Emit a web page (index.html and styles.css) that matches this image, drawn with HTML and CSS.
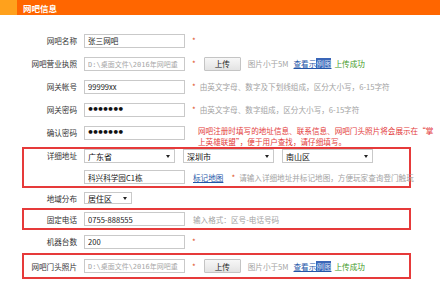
FILE: index.html
```html
<!DOCTYPE html>
<html>
<head>
  <meta charset="utf-8">
  <link rel="stylesheet" href="styles.css">
</head>

<body>
  <div class="head"><span class="head-title">网吧信息</span></div>

  <form class="info">
    <div class="row">
      <label class="lbl">网吧名称</label>
      <input class="txt" type="text" value="张三网吧">
      <span class="req">*</span>
    </div>

    <div class="row">
      <label class="lbl">网吧营业执照</label>
      <input class="txt path" type="text" value="D:\桌面文件\2016年网吧重">
      <span class="req">*</span>
      <button type="button" class="btn">上传</button>
      <span class="tip">图片小于5M</span>
      <a class="link" href="#">查看示<span class="hl">例图</span></a>
      <span class="ok">上传成功</span>
    </div>

    <div class="row">
      <label class="lbl">网关帐号</label>
      <input class="txt" type="text" value="99999xx">
      <span class="req">*</span>
      <span class="tip">由英文字母、数字及下划线组成，区分大小写，6-15字符</span>
    </div>

    <div class="row">
      <label class="lbl">网关密码</label>
      <input class="txt pwd" type="text" value="•••••••">
      <span class="req">*</span>
      <span class="tip">由英文字母、数字组成，区分大小写，6-15字符</span>
    </div>

    <div class="row">
      <label class="lbl">确认密码</label>
      <input class="txt pwd" type="text" value="•••••••">
      <span class="note">网吧注册时填写的地址信息、联系信息、网吧门头照片将会展示在“掌<br>上英雄联盟”，便于用户查找，请仔细填写。</span>
    </div>

    <div class="row mark addr">
      <label class="lbl">详细地址</label>
      <div class="addr-lines">
        <div class="line">
          <span class="sel"><select><option>广东省</option></select></span>
          <span class="sel"><select><option>深圳市</option></select></span>
          <span class="sel"><select><option>南山区</option></select></span>
        </div>
        <div class="line">
          <input class="txt" type="text" value="科兴科学园C1栋">
          <a class="link map" href="#">标记地图</a>
          <span class="req">*</span>
          <span class="tip">请输入详细地址并标记地图，方便玩家查询登门触玩</span>
        </div>
      </div>
    </div>

    <div class="row area">
      <label class="lbl">地域分布</label>
      <span class="sel small"><select><option>居住区</option></select></span>
    </div>

    <div class="row mark tel">
      <label class="lbl">固定电话</label>
      <input class="txt" type="text" value="0755-888555">
      <span class="tip hint">输入格式：区号-电话号码</span>
    </div>

    <div class="row">
      <label class="lbl">机器台数</label>
      <input class="txt" type="text" value="200">
      <span class="req">*</span>
    </div>

    <div class="row mark photo">
      <label class="lbl">网吧门头照片</label>
      <input class="txt path" type="text" value="D:\桌面文件\2016年网吧重">
      <span class="req">*</span>
      <button type="button" class="btn">上传</button>
      <span class="tip">图片小于5M</span>
      <a class="link" href="#">查看示<span class="hl">例图</span></a>
      <span class="ok">上传成功</span>
    </div>
  </form>
</body>
</html>
```

FILE: styles.css
```css
body {
  margin: 0;
  overflow: hidden;
  background: #fff;
  color: #333;
  font-family: "Noto Sans CJK SC", "Liberation Sans", sans-serif;
  font-size: 7.6px;
}

.head {
  display: flex;
  align-items: center;
  height: 15px;
  padding-left: 23px;
  background: linear-gradient(to right, #ffa11c 0, #ffa11c 17px, #ff6600 17px);
}

.head-title {
  color: #fff;
  font-size: 8.5px;
  font-weight: bold;
}

.info {
  width: 389px;
  padding: 14px 0 0 22px;
}

.row {
  display: flex;
  align-items: center;
  box-sizing: border-box;
  height: 23px;
  border: 2px solid transparent;
  white-space: nowrap;
}

.mark {
  border-color: #e63a3a;
}

.lbl {
  flex: none;
  width: 53px;
  margin-right: 7px;
  text-align: right;
  color: #333;
}

.txt {
  flex: none;
  box-sizing: border-box;
  width: 101px;
  height: 14px;
  margin: 0;
  padding: 0 3px;
  border: 1px solid #c9c9c9;
  font: inherit;
  color: #222;
}

.path {
  color: #a8a8a8;
  font-family: "DejaVu Sans Mono", "Noto Sans CJK SC", monospace;
  font-size: 7px;
}

.pwd {
  padding-left: 2px;
  font-family: "DejaVu Sans", sans-serif;
  font-size: 11px;
  font-weight: bold;
  letter-spacing: -2px;
  color: #111;
}

.req {
  margin-left: 7px;
  color: #e0502a;
  font-size: 8px;
}

.tip {
  margin-left: 4px;
  color: #a3a3a3;
}

.btn {
  box-sizing: border-box;
  width: 37px;
  height: 14px;
  margin-left: 8px;
  padding: 0;
  border: 1px solid #c4c4c4;
  border-radius: 1px;
  background: linear-gradient(#f7f7f7, #e3e3e3);
  font: inherit;
  color: #222;
}

.btn + .tip {
  margin-left: 7px;
}

.link {
  margin-left: 5px;
  color: #2456a8;
  text-decoration: underline;
}

.hl {
  background: #3a66b8;
  color: #d6e0f2;
}

.ok {
  margin-left: 3px;
  color: #3f9a1e;
}

.note {
  align-self: flex-start;
  margin: 2px 0 0 13px;
  line-height: 11px;
  color: #e33a3a;
}

/* address block */
.addr {
  align-items: flex-start;
  height: 41px;
  margin-top: 3px;
}

.addr .lbl {
  line-height: 14px;
}

.addr-lines {
  display: flex;
  flex-direction: column;
  gap: 7px;
}

.line {
  display: flex;
  align-items: center;
  gap: 8px;
  height: 14px;
}

.line .link {
  margin-left: 0;
}

.line .req {
  margin-left: 0;
}

.line .tip {
  margin-left: -4px;
}

.sel {
  position: relative;
  display: inline-block;
}

.sel select {
  box-sizing: border-box;
  width: 91px;
  height: 14px;
  margin: 0;
  padding: 0 0 0 3px;
  border: 1px solid #c9c9c9;
  border-radius: 0;
  background: #fff;
  appearance: none;
  font: inherit;
  font-size: 8px;
  color: #111;
}

.sel::after {
  content: "";
  position: absolute;
  top: 6px;
  right: 5px;
  border-top: 3px solid #222;
  border-left: 2.5px solid transparent;
  border-right: 2.5px solid transparent;
}

.sel.small select {
  width: 48px;
  height: 12px;
}

.sel.small::after {
  top: 5px;
}

.area {
  height: 20px;
}

.tel {
  height: 22px;
}

.hint {
  margin-left: 8px;
}

.photo {
  height: 26px;
}
```
